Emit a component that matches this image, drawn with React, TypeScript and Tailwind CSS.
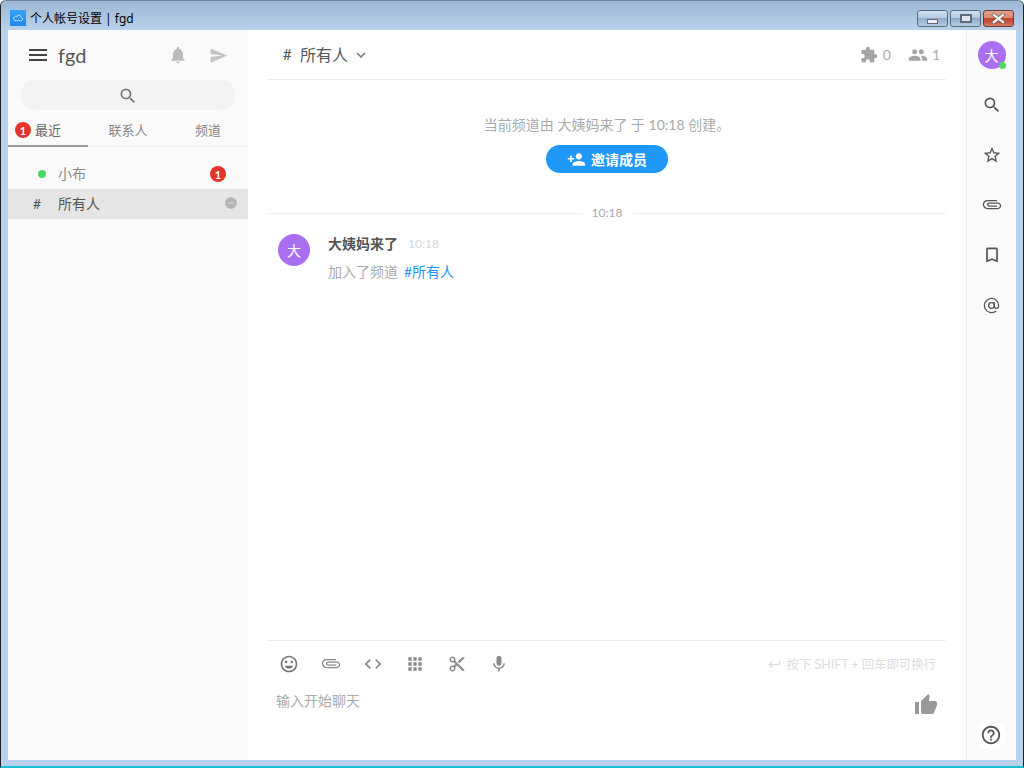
import {
  MdMenu, MdNotifications, MdSend, MdSearch, MdExtension, MdPeople, MdPersonAdd,
  MdStarBorder, MdAttachFile, MdBookmarkBorder, MdHelpOutline,
  MdOutlineInsertEmoticon, MdCode, MdApps, MdContentCut, MdMic, MdThumbUp,
  MdKeyboardReturn, MdKeyboardArrowDown, MdRemoveCircle,
} from 'react-icons/md'
import { AtSign } from 'lucide-react'

const font = "font-['Lato','Noto_Sans_CJK_SC',sans-serif]"

function Badge({ className = '' }: { className?: string }) {
  return (
    <span className={`flex h-4 w-4 items-center justify-center rounded-full bg-[#e5352b] text-[11px] font-bold leading-none text-white ${className}`}>
      1
    </span>
  )
}

function WinButton({ children }: { children: React.ReactNode }) {
  return (
    <span className="flex h-[17px] w-[31px] items-center justify-center rounded-[3px] border border-[#5a6b80] bg-[linear-gradient(#cfdff0_0%,#b5cbe3_45%,#8fabc9_50%,#b5cee6_100%)]">
      {children}
    </span>
  )
}

function TitleBar() {
  return (
    <div className="flex h-[30px] justify-between rounded-t-md border-t border-[#6f8299] bg-gradient-to-b from-[#9db8d6] to-[#b9d1ea] pl-[9px] pr-[9px] pt-[9px]">
      <div className="flex h-4 items-center gap-1">
        <span className="flex h-4 w-4 items-center justify-center bg-gradient-to-b from-[#3aa2f5] to-[#1c86ee]">
          <svg viewBox="0 0 16 16" className="h-3 w-3" fill="none" stroke="#fff" strokeWidth="1.2" strokeDasharray="2 0.6">
            <path d="M4 11.5h8a2 2 0 0 0 .4-4 3 3 0 0 0-5.6-1.5A2.5 2.5 0 0 0 4 11.5z" />
          </svg>
        </span>
        <span className="mt-px font-['Noto_Sans','Noto_Sans_CJK_SC',sans-serif] text-xs text-black">个人帐号设置 | fgd</span>
      </div>
      <div className="flex gap-[2px]">
        <WinButton><span className="mt-[5px] h-[5px] w-[11px] border border-[#667] bg-[#eef1f4]" /></WinButton>
        <WinButton><span className="h-[9px] w-[12px] border-2 border-[#5f6b78] bg-[#dfe6ee]" /></WinButton>
        <span className="flex h-[17px] w-[31px] items-center justify-center rounded-[3px] border border-[#6b3a38] bg-[linear-gradient(#e3a08e_0%,#d98a76_45%,#bf4a30_50%,#c4513a_72%,#d67d66_100%)]">
          <svg viewBox="0 0 16 12" className="h-[11px] w-[15px]" fill="none" strokeLinecap="square">
            <path d="M3 2l10 8M13 2L3 10" stroke="#6b5a58" strokeWidth="4" />
            <path d="M3 2l10 8M13 2L3 10" stroke="#f4f2f0" strokeWidth="2.6" />
          </svg>
        </span>
      </div>
    </div>
  )
}

function Sidebar() {
  return (
    <aside className="flex w-[240px] shrink-0 flex-col bg-[#fafafa]">
      <div className="flex h-[50px] items-center pl-[18px] pr-[20px]">
        <MdMenu className="h-[24px] w-[24px] text-[#444]" />
        <span className="ml-[8px] text-xl leading-none text-[#555]">fgd</span>
        <MdNotifications className="ml-auto h-[20px] w-[20px] text-[#bbb]" />
        <MdSend className="ml-[21px] h-[19px] w-[19px] text-[#c4c4c4]" />
      </div>
      <div className="mx-3 flex h-[30px] items-center justify-center rounded-full bg-[#f3f3f3] pt-px">
        <MdSearch className="h-[20px] w-[20px] text-[#777]" />
      </div>
      <div className="mt-[6px] flex h-[31px] border-b-2 border-[#f3f3f3] pt-px text-[13px] text-[#888]">
        <div className="relative -mb-[2px] flex w-[80px] items-center justify-center border-b-2 border-[#999] text-[#666]">
          <Badge className="absolute left-[7px] top-[5px]" />
          <span>最近</span>
        </div>
        <div className="flex w-[80px] items-center justify-center">联系人</div>
        <div className="flex w-[80px] items-center justify-center">频道</div>
      </div>
      <div className="mt-3 flex h-[30px] items-center pr-[22px] text-[14px] text-[#888]">
        <span className="ml-[30px] h-2 w-2 rounded-full bg-[#4cd964]" />
        <span className="ml-3 -mt-[2px]">小布</span>
        <Badge className="ml-auto" />
      </div>
      <div className="flex h-[30px] items-center bg-[#e5e5e5] pb-[2px] pr-[10px] text-[14px] text-[#555]">
        <span className="ml-[25px] w-[25px]">#</span>
        <span>所有人</span>
        <MdRemoveCircle className="ml-auto h-[14px] w-[14px] text-[#b3b3b3]" />
      </div>
    </aside>
  )
}

function Message() {
  return (
    <div className="mt-[5px] flex pl-[10px]">
      <span className="mt-[6px] flex h-8 w-8 items-center justify-center rounded-full bg-[#a96ff0] text-[14px] text-white">大</span>
      <div className="ml-[18px]">
        <div className="flex items-center pt-[6px] leading-5">
          <span className="text-[14px] font-bold text-[#555]">大姨妈来了</span>
          <span className="ml-[10px] text-xs text-[#d6d6d6]">10:18</span>
        </div>
        <div className="mt-2 text-[14px] leading-5 text-[#aaa]">
          加入了频道<span className="ml-[6px] text-[#2098fa]">#所有人</span>
        </div>
      </div>
    </div>
  )
}

function Composer() {
  return (
    <div className="h-[120px] border-t border-[#eee]">
      <div className="flex h-[46px] items-center pl-[11px] pr-[10px] text-[#888]">
        <MdOutlineInsertEmoticon className="h-[20px] w-[20px] text-[#777]" />
        <MdAttachFile className="ml-[22px] h-[20px] w-[20px] rotate-90 -scale-x-100" />
        <MdCode className="ml-[22px] h-[20px] w-[20px]" />
        <MdApps className="ml-[22px] h-[20px] w-[20px]" />
        <MdContentCut className="ml-[23px] h-[18px] w-[18px]" />
        <MdMic className="ml-[23px] h-[20px] w-[20px]" />
        <div className="ml-auto flex items-center pt-[2px] text-[12.4px] text-[#ddd]">
          <MdKeyboardReturn className="mr-[5px] h-[15px] w-[15px]" />
          按下 SHIFT + 回车即可换行
        </div>
      </div>
      <div className="flex pl-2 pr-2">
        <span className="mt-[4px] text-[14px] leading-5 text-[#aaa]">输入开始聊天</span>
        <MdThumbUp className="ml-auto mt-[6px] h-[24px] w-[24px] text-[#999]" />
      </div>
    </div>
  )
}

function Main() {
  return (
    <main className="flex min-w-0 flex-1 flex-col bg-white px-5">
      <div className="flex h-[50px] shrink-0 items-center border-b border-[#eee] pl-[15px] pr-[6px] text-[#777]">
        <span className="w-[17px] text-[15px] text-[#555]">#</span>
        <span className="text-base text-[#555]">所有人</span>
        <MdKeyboardArrowDown className="ml-[4px] h-[18px] w-[18px]" />
        <MdExtension className="ml-auto h-[18px] w-[18px] text-[#a5a5a5]" />
        <span className="ml-[5px] text-[14px] text-[#aaa]">0</span>
        <MdPeople className="ml-[17px] h-[20px] w-[20px] text-[#a5a5a5]" />
        <span className="ml-[4px] text-[14px] text-[#aaa]">1</span>
      </div>
      <div className="flex-1">
        <div className="mt-[35px] text-center text-[14px] leading-5 text-[#aaa]">当前频道由 大姨妈来了 于 10:18 创建。</div>
        <div className="mt-[10px] flex justify-center">
          <button className="flex h-7 w-[122px] items-center justify-center rounded-full bg-[#2098fa] text-[14px] font-bold text-white">
            <MdPersonAdd className="mr-[5px] h-[19px] w-[19px]" />
            邀请成员
          </button>
        </div>
        <div className="mt-[30px] flex items-center">
          <span className="h-px flex-1 bg-[#eee]" />
          <span className="w-[52px] text-center text-xs leading-5 text-[#aaa]">10:18</span>
          <span className="h-px flex-1 bg-[#eee]" />
        </div>
        <Message />
      </div>
      <Composer />
    </main>
  )
}

function RightBar() {
  const cls = 'h-[20px] w-[20px] text-[#555]'
  return (
    <aside className="flex w-[50px] shrink-0 flex-col items-center border-l border-[#eee] bg-[#fafafa]">
      <span className="relative mt-[11px] flex h-7 w-7 items-center justify-center rounded-full bg-[#a96ff0] text-[14px] text-white">
        大
        <span className="absolute bottom-0 right-0 h-[7px] w-[7px] rounded-full bg-[#4cd964]" />
      </span>
      <div className="mt-[26px] flex flex-col items-center gap-[30px]">
        <MdSearch className={cls} />
        <MdStarBorder className={cls} />
        <MdAttachFile className={`${cls} rotate-90 -scale-x-100`} />
        <MdBookmarkBorder className={cls} />
        <span className="flex h-[20px] w-[20px] items-center justify-center">
          <AtSign className="h-[17px] w-[17px] text-[#555]" strokeWidth={1.8} />
        </span>
      </div>
      <span className="mb-[10px] mr-px mt-auto flex h-[30px] w-[30px] items-center justify-center rounded-full bg-white">
        <MdHelpOutline className="h-[22px] w-[22px] text-[#555]" />
      </span>
    </aside>
  )
}

export default function App() {
  return (
    <div className={`flex h-[768px] w-[1024px] flex-col overflow-hidden rounded-t-md border-x border-b-2 border-x-[#222] border-b-[#19c2d8] bg-[#b9d1ea] ${font}`}>
      <TitleBar />
      <div className="mx-[7px] flex h-[730px] bg-white">
        <Sidebar />
        <Main />
        <RightBar />
      </div>
    </div>
  )
}
